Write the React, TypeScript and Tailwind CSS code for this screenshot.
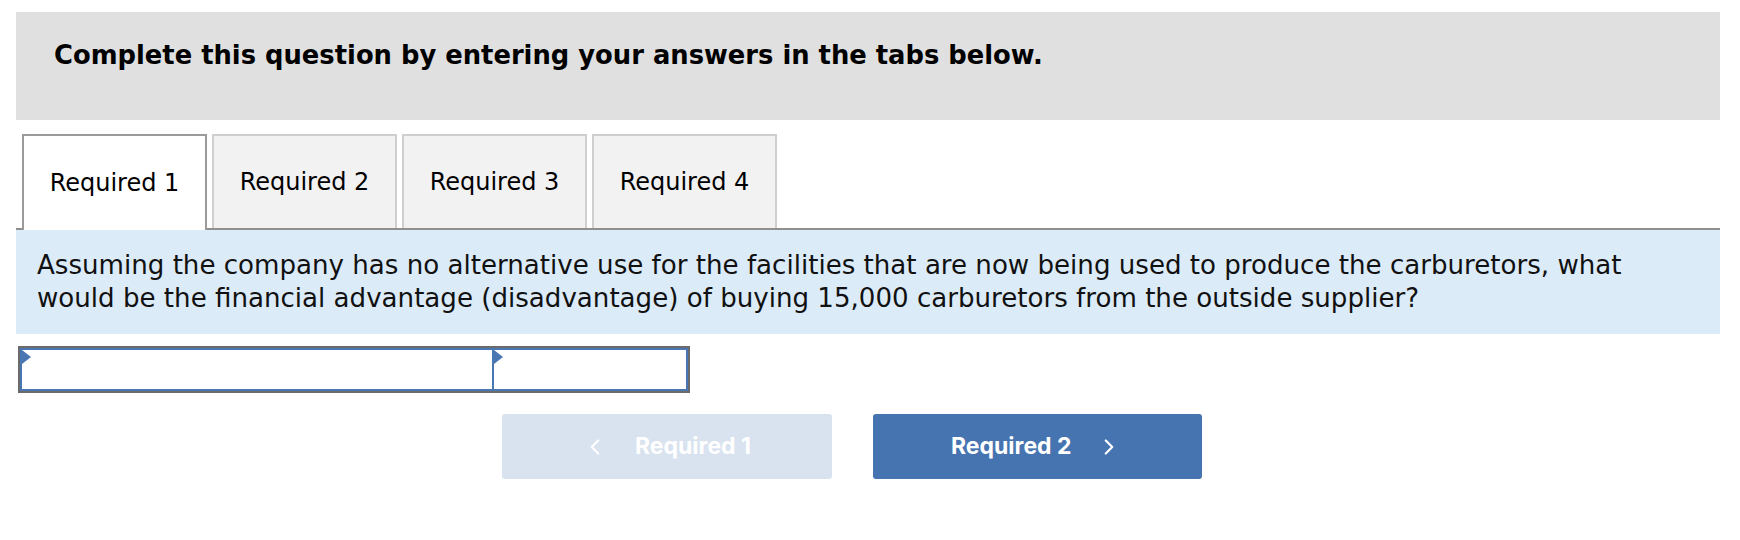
import { ChevronLeft, ChevronRight } from "lucide-react"

const tabs = ["Required 1", "Required 2", "Required 3", "Required 4"]

function Flag() {
  return (
    <svg className="absolute left-0 top-0" width="9" height="14" viewBox="0 0 9 14">
      <path d="M0 0 L9 7 L0 14 Z" fill="#4a76b4" />
    </svg>
  )
}

export default function App() {
  const active = 0

  return (
    <div className="w-[1740px] h-[540px] bg-white pt-[12px] pl-[16px] pr-[20px] font-['DejaVu_Sans',Verdana,sans-serif] text-black">
      <div className="h-[108px] bg-[#e0e0e0] pl-[38px] pt-[27px]">
        <h2 className="text-[25.8px] leading-[32px] font-bold">
          Complete this question by entering your answers in the tabs below.
        </h2>
      </div>

      <div className="mt-[14px] flex gap-[5px] pl-[6px] border-b-2 border-[#8f8f8f]">
        {tabs.map((t, i) => (
          <div
            key={t}
            className={
              i === active
                ? "w-[185px] h-[96px] -mb-[2px] flex items-center justify-center bg-white border-2 border-b-0 border-[#9a9a9a] text-[24px]"
                : "w-[185px] h-[94px] flex items-center justify-center bg-[#f2f2f2] border-2 border-b-0 border-[#cfcfcf] text-[24px]"
            }
          >
            {t}
          </div>
        ))}
      </div>

      <div className="bg-[#dcebf8] pl-[21px] pr-[40px] pt-[19px] pb-[19px] text-[26.1px] leading-[33px] text-[#111]">
        Assuming the company has no alternative use for the facilities that are now being used to produce the carburetors, what
        <br />
        would be the financial advantage (disadvantage) of buying 15,000 carburetors from the outside supplier?
      </div>

      <div className="mt-[12px] ml-[2px] flex w-[672px] h-[47px] border-2 border-[#6b6b6b]">
        <div className="relative w-[474px] h-full border-2 border-[#4a76b4] bg-white">
          <Flag />
        </div>
        <div className="relative flex-1 h-full border-2 border-l-0 border-[#4a76b4] bg-white">
          <Flag />
        </div>
      </div>

      <div className="mt-[21px] flex gap-[41px] pl-[486px] font-['Inter',Arial,sans-serif]">
        <button className="w-[330px] h-[65px] rounded-[3px] bg-[#d9e3ef] text-white font-bold text-[23px] flex items-center pl-[80px] gap-[27px]">
          <ChevronLeft className="w-[26px] h-[26px]" strokeWidth={2} />
          <span>Required 1</span>
        </button>
        <button className="w-[329px] h-[65px] rounded-[3px] bg-[#4674b1] text-white font-bold text-[23px] flex items-center pl-[78px] gap-[24px]">
          <span>Required 2</span>
          <ChevronRight className="w-[26px] h-[26px]" strokeWidth={2} />
        </button>
      </div>
    </div>
  )
}
